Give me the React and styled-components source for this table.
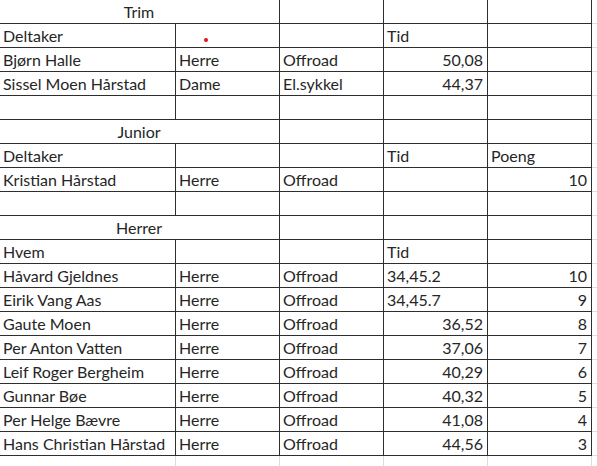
import React from "react"
import styled, { createGlobalStyle } from "styled-components"

const GlobalStyle = createGlobalStyle`
  html, body {
    margin: 0;
    padding: 0;
    background: #ffffff;
  }
  body {
    font-family: "Lato", "Liberation Sans", sans-serif;
    color: #262626;
    overflow: hidden;
  }
`

const Sheet = styled.div`
  width: 597px;
  height: 466px;
  overflow: hidden;
  background: #fff;
`

const Row = styled.div`
  display: grid;
  grid-template-columns: 176px 104px 104px 104px 104px 1fr;
  height: 24px;
`

const Cell = styled.div`
  position: relative;
  display: flex;
  align-items: flex-end;
  justify-content: ${props =>
    props.align === "right"
      ? "flex-end"
      : props.align === "center"
      ? "center"
      : "flex-start"};
  grid-column: span ${props => props.span || 1};
  padding: 0 4px 2px 3px;
  font-size: 16px;
  line-height: 19px;
  white-space: nowrap;
  border-bottom: 1px solid #2e2e2e;
  border-right: 1px solid #2e2e2e;
`

const Filler = styled.div`
  border-bottom: 1px solid #dcdcdc;
`

const TailRow = styled.div`
  display: grid;
  grid-template-columns: 176px 104px 104px 104px 104px 1fr;
  height: 11px;
`

const TailCell = styled.div`
  border-right: 1px solid #dcdcdc;
`

const Dot = styled.span`
  position: absolute;
  left: 28px;
  top: 14px;
  width: 4px;
  height: 4px;
  border-radius: 50%;
  background: #e0141e;
`

const sections = [
  {
    title: "Trim",
    rows: [
      ["Deltaker", "dot", "", "Tid", ""],
      ["Bjørn Halle", "Herre", "Offroad", 50.08, ""],
      ["Sissel Moen Hårstad", "Dame", "El.sykkel", 44.37, ""],
      ["", "", "", "", ""],
    ],
  },
  {
    title: "Junior",
    rows: [
      ["Deltaker", "", "", "Tid", "Poeng"],
      ["Kristian Hårstad", "Herre", "Offroad", "", 10],
      ["", "", "", "", ""],
    ],
  },
  {
    title: "Herrer",
    rows: [
      ["Hvem", "", "", "Tid", ""],
      ["Håvard Gjeldnes", "Herre", "Offroad", "34,45.2", 10],
      ["Eirik Vang Aas", "Herre", "Offroad", "34,45.7", 9],
      ["Gaute Moen", "Herre", "Offroad", 36.52, 8],
      ["Per Anton Vatten", "Herre", "Offroad", 37.06, 7],
      ["Leif Roger Bergheim", "Herre", "Offroad", 40.29, 6],
      ["Gunnar Bøe", "Herre", "Offroad", 40.32, 5],
      ["Per Helge Bævre", "Herre", "Offroad", 41.08, 4],
      ["Hans Christian Hårstad", "Herre", "Offroad", 44.56, 3],
    ],
  },
]

const formatValue = value => {
  if (typeof value !== "number") return value
  if (Number.isInteger(value)) return String(value)
  return value.toFixed(2).replace(".", ",")
}

const DataRow = ({ values }) => (
  <Row>
    {values.map((value, i) => (
      <Cell key={i} align={typeof value === "number" ? "right" : "left"}>
        {value === "dot" ? <Dot /> : formatValue(value)}
      </Cell>
    ))}
    <Filler />
  </Row>
)

const TitleRow = ({ title }) => (
  <Row>
    <Cell span={2} align="center">
      {title}
    </Cell>
    <Cell />
    <Cell />
    <Cell />
    <Filler />
  </Row>
)

const App = () => {
  return (
    <>
      <GlobalStyle />
      <Sheet>
        {sections.map(section => (
          <React.Fragment key={section.title}>
            <TitleRow title={section.title} />
            {section.rows.map((row, i) => (
              <DataRow key={i} values={row} />
            ))}
          </React.Fragment>
        ))}
        <TailRow>
          <TailCell />
          <TailCell />
          <TailCell />
          <TailCell />
          <TailCell />
        </TailRow>
      </Sheet>
    </>
  )
}

export default App
